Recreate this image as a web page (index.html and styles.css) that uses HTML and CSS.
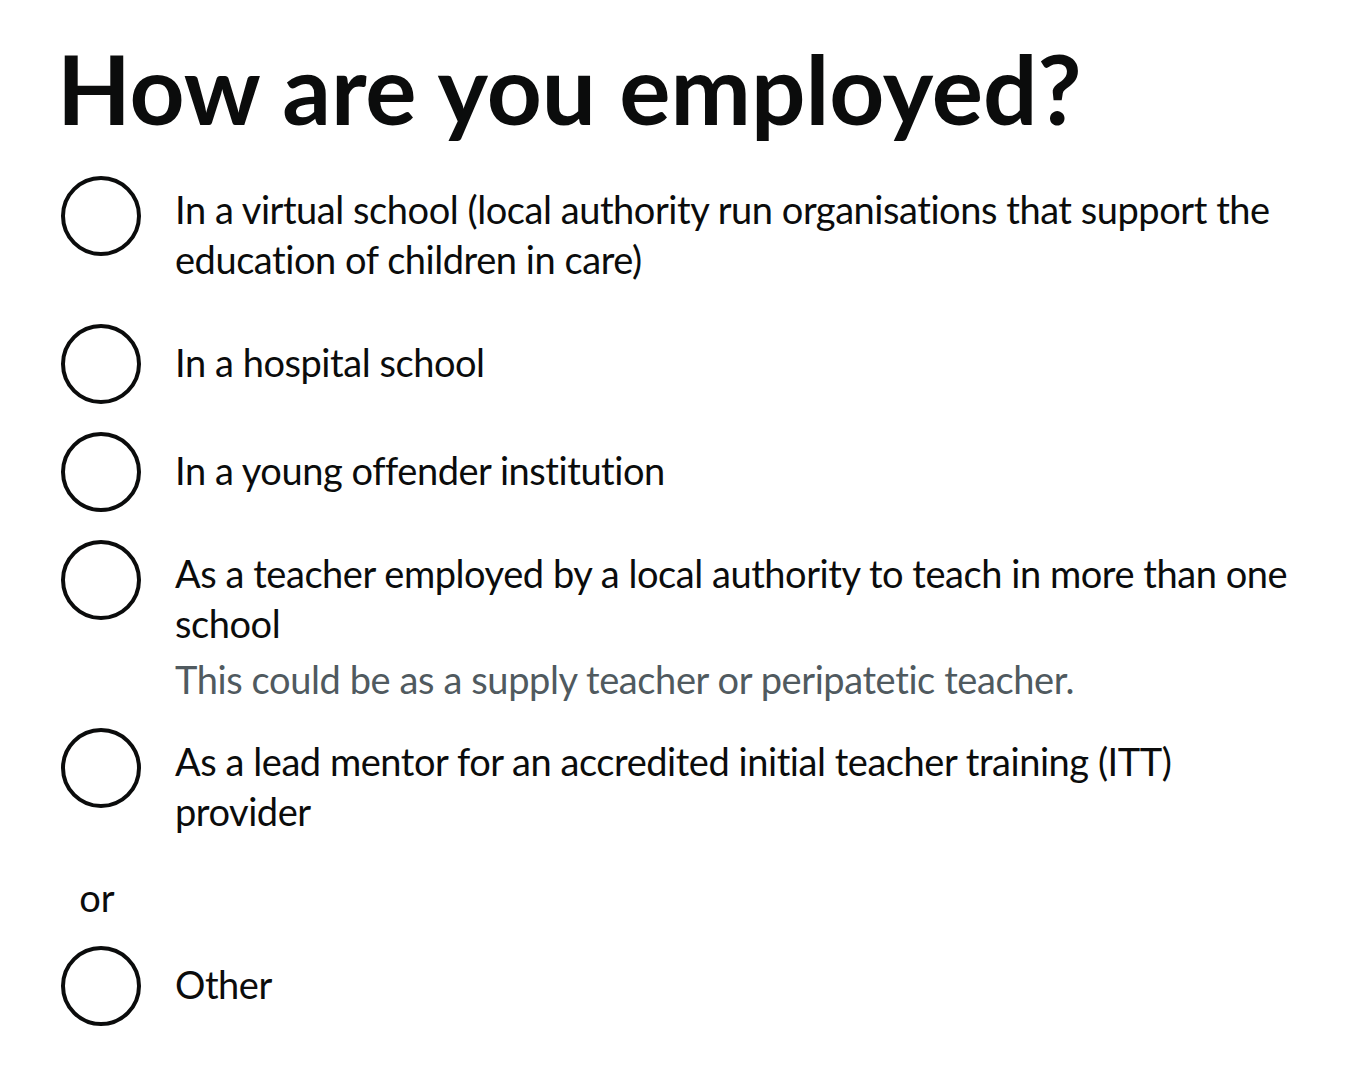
FILE: index.html
```html
<!DOCTYPE html>
<html lang="en">
<head>
<meta charset="utf-8">
<title>How are you employed?</title>
<link rel="stylesheet" href="styles.css">
</head>
<body>
<main class="page">
  <form class="form-group">
    <fieldset class="fieldset">
      <legend class="legend">
        <h1 class="heading">How are you employed?</h1>
      </legend>
      <div class="radios">
        <div class="radio-item">
          <input class="radio-input" id="emp-1" name="employment" type="radio" value="virtual-school">
          <label class="radio-label" for="emp-1">In a virtual school (local authority run organisations that support the education of children in care)</label>
        </div>
        <div class="radio-item">
          <input class="radio-input" id="emp-2" name="employment" type="radio" value="hospital-school">
          <label class="radio-label" for="emp-2">In a hospital school</label>
        </div>
        <div class="radio-item">
          <input class="radio-input" id="emp-3" name="employment" type="radio" value="young-offender">
          <label class="radio-label" for="emp-3">In a young offender institution</label>
        </div>
        <div class="radio-item">
          <input class="radio-input" id="emp-4" name="employment" type="radio" value="local-authority" aria-describedby="emp-4-hint">
          <label class="radio-label" for="emp-4">As a teacher employed by a local authority to teach in more than one school</label>
          <div class="radio-hint" id="emp-4-hint">This could be as a supply teacher or peripatetic teacher.</div>
        </div>
        <div class="radio-item">
          <input class="radio-input" id="emp-5" name="employment" type="radio" value="lead-mentor">
          <label class="radio-label" for="emp-5">As a lead mentor for an accredited initial teacher training (ITT) provider</label>
        </div>
        <div class="radio-divider">or</div>
        <div class="radio-item">
          <input class="radio-input" id="emp-6" name="employment" type="radio" value="other">
          <label class="radio-label" for="emp-6">Other</label>
        </div>
      </div>
    </fieldset>
  </form>
</main>
</body>
</html>
```
FILE: styles.css
```css
html, body {
  margin: 0;
  padding: 0;
  background: #ffffff;
}

body {
  font-family: Lato, "Liberation Sans", Arial, sans-serif;
  color: #0b0c0c;
}

.page {
  padding: 38px 28px 0 57px;
}

.form-group {
  margin: 0;
}

.fieldset {
  margin: 0;
  padding: 0;
  border: 0;
  min-width: 0;
}

.legend {
  display: block;
  box-sizing: border-box;
  max-width: 100%;
  margin: 0 0 34px;
  padding: 0;
  white-space: normal;
}

.heading {
  margin: 0;
  font-size: 96px;
  line-height: 100px;
  font-weight: 700;
  letter-spacing: 0;
  color: #0b0c0c;
}

.radios {
  display: block;
}

.radio-item {
  display: flex;
  flex-wrap: wrap;
  position: relative;
  margin-bottom: 20px;
}

.radio-input {
  z-index: 1;
  width: 88px;
  height: 88px;
  margin: 0;
  opacity: 0;
  cursor: pointer;
}

.radio-label {
  align-self: center;
  max-width: calc(100% - 148px);
  margin-bottom: 0;
  padding: 12px 30px 16px;
  font-size: 38px;
  line-height: 50px;
  font-weight: 400;
  letter-spacing: -0.45px;
  cursor: pointer;
}

.radio-label::before {
  content: "";
  box-sizing: border-box;
  position: absolute;
  top: 4px;
  left: 4px;
  width: 80px;
  height: 80px;
  border: 4px solid currentColor;
  border-radius: 50%;
  background: transparent;
}

.radio-hint {
  display: block;
  box-sizing: border-box;
  width: 100%;
  margin-top: -10px;
  padding: 0 30px 0 118px;
  font-size: 38px;
  line-height: 50px;
  letter-spacing: -0.4px;
  color: #505a5f;
}

.radio-divider {
  width: 80px;
  margin-bottom: 20px;
  font-size: 38px;
  line-height: 50px;
  text-align: center;
}
```
